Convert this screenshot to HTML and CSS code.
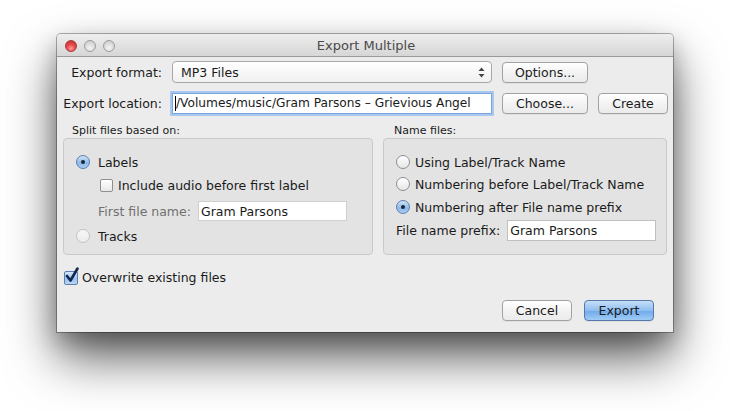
FILE: index.html
```html
<!DOCTYPE html>
<html>
<head>
<meta charset="utf-8">
<link rel="stylesheet" href="styles.css">
</head>
<body>
<div class="window">
  <div class="titlebar">
    <div class="lights">
      <span class="light red"></span>
      <span class="light"></span>
      <span class="light"></span>
    </div>
    <div class="title">Export Multiple</div>
  </div>
  <div class="content">
    <div class="toprows">
      <div class="lbl">Export format:</div>
      <div class="select"><span>MP3 Files</span>
        <svg class="updown" width="7" height="11" viewBox="0 0 7 11"><path d="M3.5 0.5 L6.5 4 L0.5 4 Z M3.5 10.5 L6.5 7 L0.5 7 Z" fill="#444"/></svg>
      </div>
      <div class="btn">Options...</div>
      <div></div>
      <div class="lbl">Export location:</div>
      <div class="field focus"><span class="caret"></span>/Volumes/music/Gram Parsons – Grievious Angel</div>
      <div class="btn">Choose...</div>
      <div class="btn">Create</div>
    </div>
    <div class="groups">
      <div class="group left">
        <div class="legend">Split files based on:</div>
        <div class="box">
          <div class="row r1"><span class="radio on"></span><span class="txt">Labels</span></div>
          <div class="row r2"><span class="check"></span><span class="txt">Include audio before first label</span></div>
          <div class="row r3"><span class="txt dim">First file name:</span><div class="field small">Gram Parsons</div></div>
          <div class="row r4"><span class="radio dis"></span><span class="txt">Tracks</span></div>
        </div>
      </div>
      <div class="group right">
        <div class="legend">Name files:</div>
        <div class="box">
          <div class="row q1"><span class="radio"></span><span class="txt">Using Label/Track Name</span></div>
          <div class="row q2"><span class="radio"></span><span class="txt">Numbering before Label/Track Name</span></div>
          <div class="row q3"><span class="radio on"></span><span class="txt">Numbering after File name prefix</span></div>
          <div class="row q4"><span class="txt">File name prefix:</span><div class="field small">Gram Parsons</div></div>
        </div>
      </div>
    </div>
    <div class="overwrite">
      <span class="check on"><svg width="16" height="17" viewBox="0 0 16 17"><path d="M3 9 L6.5 13.5 L13.5 1.5" fill="none" stroke="#10284e" stroke-width="2.6" stroke-linecap="round" stroke-linejoin="round"/></svg></span>
      <span class="txt">Overwrite existing files</span>
    </div>
    <div class="actions">
      <div class="btn">Cancel</div>
      <div class="btn default">Export</div>
    </div>
  </div>
</div>
</body>
</html>
```
FILE: styles.css
```css
html, body {
  margin: 0;
  padding: 0;
  background: #ffffff;
}
body {
  font-family: "DejaVu Sans", "Liberation Sans", sans-serif;
  font-size: 12.5px;
  color: #1a1a1a;
  width: 730px;
  height: 411px;
  overflow: hidden;
}
.window {
  margin: 34px 0 0 57px;
  width: 616px;
  height: 298px;
  background: #ececec;
  border-radius: 4px 4px 0 0;
  box-shadow: 0 0 0 1px rgba(0,0,0,0.3), 0 26px 50px rgba(0,0,0,0.62), 0 10px 22px rgba(0,0,0,0.25);
  display: flex;
  flex-direction: column;
}
.titlebar {
  height: 22px;
  border-bottom: 1px solid #9a9a9a;
  background: linear-gradient(#eeeeee, #d6d6d6);
  border-radius: 4px 4px 0 0;
  display: flex;
  align-items: center;
  position: relative;
}
.lights {
  display: flex;
  gap: 7px;
  padding: 1px 0 0 8px;
}
.light {
  width: 12px;
  height: 12px;
  border-radius: 50%;
  box-sizing: border-box;
  border: 1px solid #9c9c9c;
  background: radial-gradient(circle at 50% 70%, #f4f4f4 0%, #d8d8d8 60%, #c4c4c4 100%);
}
.light.red {
  border-color: #a63a3a;
  background: radial-gradient(circle at 50% 75%, #ff9a9a 0%, #e5484b 45%, #c22a2c 100%);
}
.title {
  flex: 1;
  text-align: center;
  font-size: 13px;
  color: #4a4a4a;
  margin-left: -56px;
  padding-top: 1px;
}
.content {
  display: flex;
  flex-direction: column;
}
.toprows {
  display: grid;
  grid-template-columns: 100px 320px 86px 70px;
  grid-template-rows: 22px 22px;
  column-gap: 10px;
  row-gap: 9px;
  padding: 4px 0 0 5px;
  align-items: center;
}
.lbl {
  text-align: right;
  white-space: nowrap;
}
.select {
  height: 22px;
  box-sizing: border-box;
  border: 1px solid #a8a8a8;
  border-radius: 4px;
  background: linear-gradient(#ffffff, #f0f0f0);
  display: flex;
  align-items: center;
  justify-content: space-between;
  padding: 0 6px 0 8px;
}
.updown { display: block; }
.btn {
  height: 21px;
  box-sizing: border-box;
  border: 1px solid #a2a2a2;
  border-radius: 4px;
  background: linear-gradient(#ffffff, #f1f1f1 60%, #ebebeb);
  box-shadow: 0 1px 0 rgba(0,0,0,0.05);
  display: flex;
  align-items: center;
  justify-content: center;
  white-space: nowrap;
}
.field {
  height: 22px;
  box-sizing: border-box;
  background: #ffffff;
  border: 1px solid #b4b4b4;
  display: flex;
  align-items: center;
  white-space: nowrap;
  overflow: hidden;
  padding-left: 2px;
}
.field.focus {
  border: 1px solid #7aa5dc;
  box-shadow: 0 0 0 2px #a9c8ef;
  height: 21px;
  font-size: 12.2px;
}
.caret {
  width: 1px;
  height: 15px;
  background: #000;
}
.groups {
  display: flex;
  gap: 10px;
  padding-left: 6px;
  margin-top: 10px;
}
.group { display: flex; flex-direction: column; }
.group.left { width: 310px; }
.group.right { width: 284px; }
.legend {
  font-size: 11px;
  line-height: 13px;
  height: 14px;
}
.group.left .legend { padding-left: 9px; }
.group.right .legend { padding-left: 11px; }
.box {
  height: 117px;
  box-sizing: border-box;
  border: 1px solid #c9c9c9;
  border-radius: 4px;
  background: #e3e3e3;
  display: flex;
  flex-direction: column;
}
.row {
  display: flex;
  align-items: center;
  height: 20px;
}
.radio {
  width: 14px;
  height: 14px;
  box-sizing: border-box;
  border-radius: 50%;
  border: 1px solid #8f8f8f;
  background: linear-gradient(#ffffff, #e6e6e6);
  display: flex;
  align-items: center;
  justify-content: center;
  flex: none;
}
.radio.on {
  border-color: #5d7fae;
  background: linear-gradient(#cfe2f7, #8bb9ec 60%, #a9cdf3);
}
.radio.on::after {
  content: "";
  width: 4px;
  height: 4px;
  border-radius: 50%;
  background: #1a2433;
}
.radio.dis {
  border-color: #c2c2c2;
  background: linear-gradient(#f7f7f7, #ececec);
}
.check {
  width: 13px;
  height: 13px;
  box-sizing: border-box;
  border: 1px solid #8f8f8f;
  border-radius: 2px;
  background: linear-gradient(#ffffff, #e8e8e8);
  flex: none;
  position: relative;
}
.check.on {
  width: 14px;
  height: 14px;
  border-color: #5d7fae;
  background: linear-gradient(#d6e6f8, #9cc3ee 60%, #b9d6f5);
}
.check.on svg {
  position: absolute;
  left: -1px;
  top: -5px;
}
.dim { color: #707070; }
.r1 { margin: 13px 0 0 12px; }
.r1 .txt, .r4 .txt { margin-left: 8px; }
.r2 { margin: 3px 0 0 36px; }
.r2 .txt { margin-left: 5px; }
.r3 { margin: 6px 0 0 34px; }
.r3 .field { width: 149px; height: 20px; margin-left: 7px; border-color: #d0d0d0; }
.r4 { margin: 5px 0 0 12px; }
.q1 { margin: 13px 0 0 12px; }
.q2 { margin: 2px 0 0 12px; }
.q3 { margin: 3px 0 0 12px; }
.q1 .txt, .q2 .txt, .q3 .txt { margin-left: 5px; }
.q4 { margin: 3px 0 0 12px; }
.q4 .field { width: 149px; height: 21px; margin-left: 7px; border-color: #c0c0c0; }
.overwrite {
  display: flex;
  align-items: center;
  margin: 15px 0 0 7px;
  height: 15px;
}
.overwrite .txt { margin-left: 4px; }
.actions {
  display: flex;
  justify-content: flex-end;
  gap: 12px;
  padding-right: 19px;
  margin-top: 15px;
}
.actions .btn { width: 70px; }
.btn.default {
  border-color: #5577aa;
  background: linear-gradient(#c6dff8, #8ebdf0 50%, #6eaaec 51%, #9fccf5);
}
```
